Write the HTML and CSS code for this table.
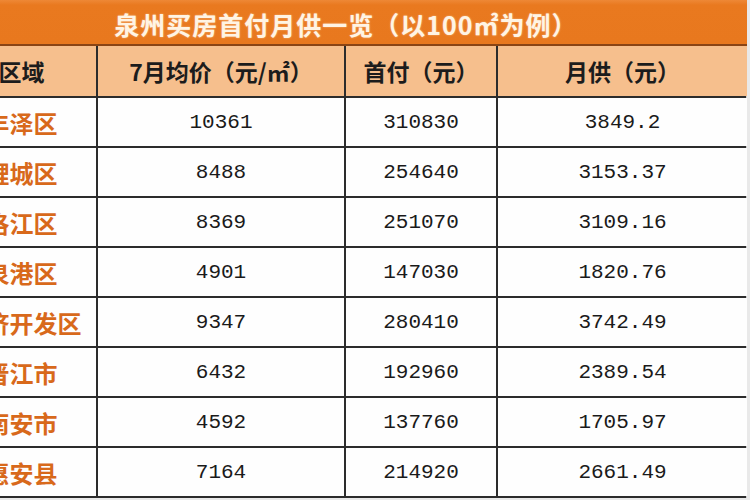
FILE: index.html
```html
<!DOCTYPE html>
<html lang="zh-CN">
<head>
<meta charset="utf-8">
<title>泉州买房首付月供一览</title>
<link rel="stylesheet" href="styles.css">
</head>
<body>
<div class="sheet">
  <div class="title">泉州买房首付月供一览（以100㎡为例）</div>
  <div class="grid">
    <div class="hd">区域</div>
    <div class="hd">7月均价（元/㎡）</div>
    <div class="hd">首付（元）</div>
    <div class="hd">月供（元）</div>

    <div class="area">丰泽区</div><div class="num">10361</div><div class="num">310830</div><div class="num">3849.2</div>
    <div class="area">鲤城区</div><div class="num">8488</div><div class="num">254640</div><div class="num">3153.37</div>
    <div class="area">洛江区</div><div class="num">8369</div><div class="num">251070</div><div class="num">3109.16</div>
    <div class="area">泉港区</div><div class="num">4901</div><div class="num">147030</div><div class="num">1820.76</div>
    <div class="area">经济开发区</div><div class="num">9347</div><div class="num">280410</div><div class="num">3742.49</div>
    <div class="area">晋江市</div><div class="num">6432</div><div class="num">192960</div><div class="num">2389.54</div>
    <div class="area">南安市</div><div class="num">4592</div><div class="num">137760</div><div class="num">1705.97</div>
    <div class="area">惠安县</div><div class="num">7164</div><div class="num">214920</div><div class="num">2661.49</div>
  </div>
</div>
</body>
</html>
```
FILE: styles.css
```css
html, body {
  margin: 0;
  padding: 0;
}
body {
  width: 750px;
  height: 500px;
  overflow: hidden;
  background: #e9e9e9;
  font-family: "Noto Sans CJK SC", "Noto Sans", sans-serif;
}
.sheet {
  width: 800px;
  margin-left: -53px;
}
.title {
  height: 46px;
  box-sizing: border-box;
  padding: 2px 2px 0 0;
  background: linear-gradient(#ee8836 0, #e9791f 5px, #e8781e 100%);
  border-bottom: 2px solid #8a4414;
  color: #fff4e4;
  font-size: 25px;
  font-weight: 700;
  letter-spacing: 1px;
  line-height: 44px;
  text-align: center;
  text-shadow: 0 0 2px rgba(255, 230, 200, 0.6);
}
.grid {
  display: grid;
  grid-template-columns: 149px 246px 150px 249px;
  grid-template-rows: 50px repeat(8, 48px);
  gap: 2px;
  background: #2c2c2c;
  padding-bottom: 2px;
  border-right: 1px solid #cfcfcf;
  width: 799px;
}
.hd {
  background: #f6bf8d;
  color: #1c1c1c;
  font-size: 23px;
  font-weight: 700;
  display: flex;
  align-items: center;
  justify-content: center;
}
.area {
  background: #fefefe;
  color: #d8691b;
  font-size: 24px;
  font-weight: 700;
  display: flex;
  align-items: center;
  justify-content: center;
  white-space: nowrap;
}
.num {
  background: #fefefe;
  color: #1a1a1a;
  font-family: "Liberation Mono", monospace;
  font-size: 21px;
  display: flex;
  align-items: center;
  justify-content: center;
}
```
